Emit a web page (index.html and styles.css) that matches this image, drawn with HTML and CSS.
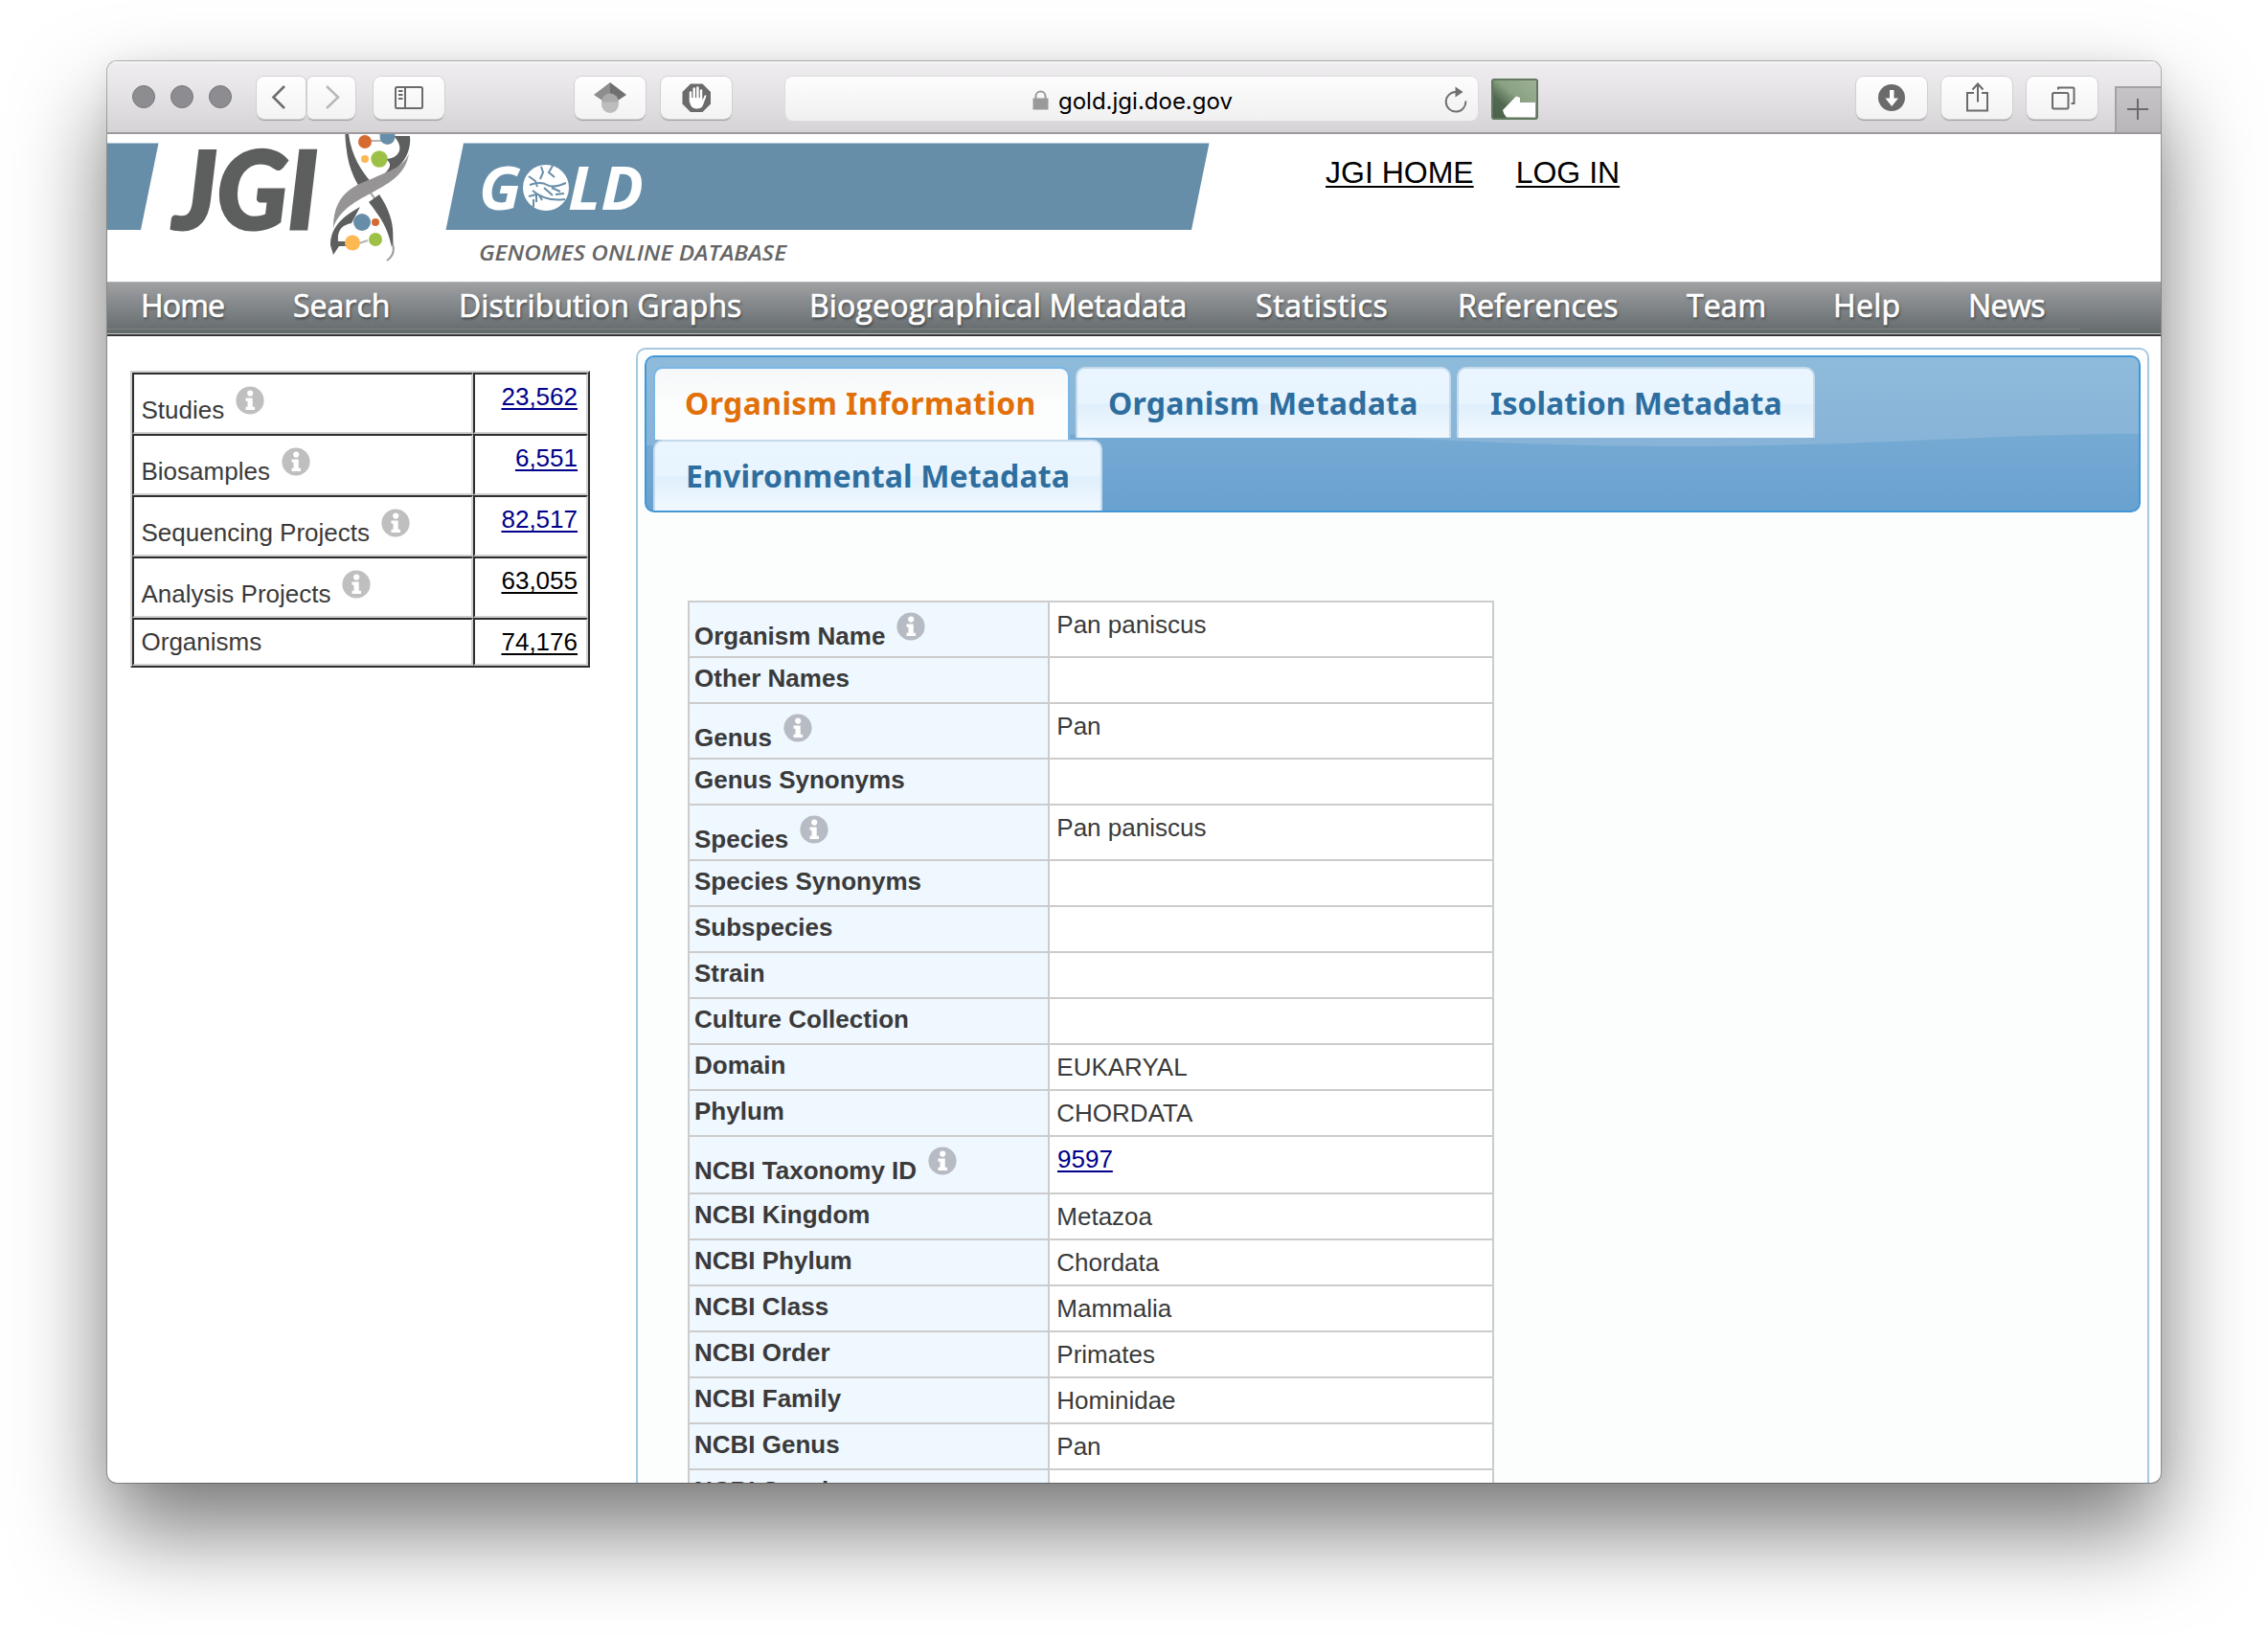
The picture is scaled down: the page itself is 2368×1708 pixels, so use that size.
FILE: index.html
```html
<!DOCTYPE html>
<html lang="en">
<head>
<meta charset="utf-8">
<title>GOLD - Genomes Online Database</title>
<link rel="stylesheet" href="styles.css">
</head>
<body>
<svg width="0" height="0" class="defs" aria-hidden="true">
  <symbol id="info" viewBox="0 0 30 30">
    <circle cx="15" cy="15" r="14.6" fill="currentColor"/>
    <circle cx="15.2" cy="7.6" r="3.1" fill="#fff"/>
    <path d="M10.5 12.5h7.2v9.3h2.3v3.2h-9.5v-3.2h2v-6.1h-2z" fill="#fff"/>
  </symbol>
</svg>
<div class="window">
  <div class="toolbar">
    <i class="light"></i><i class="light"></i><i class="light"></i>
    <div class="btn back"><svg width="51" height="44" viewBox="0 0 51 44"><path d="M29 10L17.500 21.500L29 33" fill="none" stroke="#6e6e6e" stroke-width="2.600"/></svg></div>
    <div class="btn fwd"><svg width="51" height="44" viewBox="0 0 51 44"><path d="M20 10L32 21.500L20 33" fill="none" stroke="#b9b9b9" stroke-width="2.600"/></svg></div>
    <div class="btn side"><svg width="74" height="44" viewBox="0 0 74 44"><rect x="23" y="11" width="28" height="22" rx="1.500" fill="none" stroke="#6b6b6b" stroke-width="2"/><path d="M33 11v22M26 15h4.500M26 19h4.500M26 23h4.500" stroke="#6b6b6b" stroke-width="2"/></svg></div>
    <div class="btn cap"><svg width="74" height="44" viewBox="0 0 74 44"><path d="M37 6L20 19L29 25L37 20Z" fill="#8d8d8d"/><path d="M37 6L54 19L45 25L37 20Z" fill="#707070"/><circle cx="37" cy="29" r="9" fill="#bdbdbd"/><path d="M28 26.500a9 9 0 0 1 18 0z" fill="#aaa"/></svg></div>
    <div class="btn hand"><svg width="74" height="44" viewBox="0 0 74 44"><path d="M31 7.500h12.500l8.500 8.500v12.500l-8.500 8.500h-12.500l-8.500-8.500v-12.500z" fill="#6b6b6b"/><path d="M31 26V16.500M34.700 24V12.500M38.400 24V11.500M42 25V14.500" stroke="#fff" stroke-width="2.500" stroke-linecap="round"/><path d="M29.800 22h13.500v3l2.500-5.500q2-1 1.500 1.200l-3.500 9.500q-1.500 3.300-6.500 3.300c-5 0-7.500-3.500-7.500-11.500z" fill="#fff"/></svg></div>
    <div class="address">
      <svg class="lock" width="17" height="21" viewBox="0 0 17 21"><path d="M3.500 9V6.500a5 5 0 0 1 10 0V9" fill="none" stroke="#9a9a9a" stroke-width="2"/><rect x=".5" y="8.500" width="16" height="12" fill="#9a9a9a"/></svg>
      <span>gold.jgi.doe.gov</span>
      <svg class="reload" width="26" height="30" viewBox="0 0 26 30"><path d="M13 7A10.300 10.300 0 1 0 23.300 16.500" fill="none" stroke="#707070" stroke-width="2"/><path d="M12.500 1.500l8 5.500L12.500 12.500z" fill="#707070"/></svg>
    </div>
    <svg class="thumb" width="49" height="43" viewBox="0 0 49 43"><defs><linearGradient id="tg" x1="1" y1="0" x2="0" y2="1"><stop offset="0" stop-color="#9fb396"/><stop offset=".45" stop-color="#8aa182"/><stop offset=".7" stop-color="#536850"/><stop offset="1" stop-color="#4a6048"/></linearGradient></defs><rect x="1" y="1" width="47" height="41" rx="2" fill="url(#tg)" stroke="#62785f" stroke-width="2"/><path d="M12 33L26 18.500L30 20V25H46V40.500H16Q13 38 12 33Z" fill="#fff"/></svg>
    <div class="btn dl"><svg width="74" height="44" viewBox="0 0 74 44"><circle cx="37" cy="22" r="14" fill="#6b6b6b"/><path d="M35 14h4.500v8.500h4.500l-6.800 8.500l-6.800-8.500h4.600z" fill="#fff"/></svg></div>
    <div class="btn share"><svg width="74" height="44" viewBox="0 0 74 44"><path d="M34 17h-7v18.500h21V17H42M38 26.500V8M32.500 13.500L38 7.500l5.500 6" fill="none" stroke="#6b6b6b" stroke-width="2"/></svg></div>
    <div class="btn tabs"><svg width="74" height="44" viewBox="0 0 74 44"><rect x="27" y="17" width="16.500" height="16.500" rx="1.500" fill="none" stroke="#6b6b6b" stroke-width="2"/><path d="M33 13.500v-2h15.500q1 0 1 1v15.500h-3" fill="none" stroke="#6b6b6b" stroke-width="2"/></svg></div>
    <div class="newtab"><svg width="46" height="46" viewBox="0 0 46 46"><path d="M11 22h22M22 11v22" stroke="#6b696b" stroke-width="2"/></svg></div>
  </div>

  <div class="banner">
    <svg class="logo" width="1160" height="154" viewBox="112 140 1160 154">
      <path d="M112 149.500H165.500L147 240H112Z" fill="#678ea9"/>
      <path d="M484 149.500H1262.500L1244 240H465.500Z" fill="#678ea9"/>
      <text class="jgi" x="181" y="239" textLength="151" lengthAdjust="spacingAndGlyphs">JGI</text>
      <g>
        <path d="M361 140C362 170 376 187 385 199C400 218 409 235 410 255C412 262 410 268 404 272" fill="none" stroke="#9b999a" stroke-width="2"/>
        <path d="M361 140H364C367 163 377 178 389 192L378 200C365 180 361 163 361 140Z" fill="#5d5e5e"/>
        <path d="M385 211L396 203C408 221 413 238 409 258C405 240 400 230 385 211Z" fill="#5d5e5e"/>
        <path d="M411 142H428C430 161 418 178 396 186C409 176 410 170 402 166C417 166 423 154 411 142Z" fill="#5d5e5e"/>
        <path d="M427 160C421 202 361 199 348 238C348 196 378 192 394 184C414 176 423 171 427 160Z" fill="#969495"/>
        <path d="M376 216C354 228 345 240 345 256L348 266L354 257H362V252H353C352 240 357 235 367 233Z" fill="#5d5e5e"/>
        <path d="M380 147h20M375 254l9-3" stroke="#b5b5b5" stroke-width="2"/>
        <circle cx="381" cy="148" r="7" fill="#d66b32"/>
        <path d="M396.500 140H412.500Q413 150.500 404.500 151Q396 150.500 396.500 140Z" fill="#678ea9"/>
        <circle cx="381" cy="166" r="4" fill="#fcb853"/>
        <circle cx="396" cy="166" r="8.700" fill="#9dc146"/>
        <circle cx="378" cy="232" r="9" fill="#678ea9"/>
        <circle cx="392" cy="232" r="4" fill="#d66b32"/>
        <circle cx="368" cy="253.500" r="8" fill="#fcb853"/>
        <circle cx="392" cy="250" r="7" fill="#9dc146"/>
      </g>
      <text class="gold" x="500" y="219" textLength="44" lengthAdjust="spacingAndGlyphs">G</text>
      <circle cx="570" cy="196" r="24" fill="#fff"/>
      <path d="M565 174l2 6-3 7M577 173l-4 7 6 5M552 184l7 5 2 6M553 193q12-4 18 0t20-2M556 199q14 12 34 9M568 196l9 8M576 196l9 4M552 205l8-2 0 8M557 208v8M563 204l3 5M580 203l9-1" fill="none" stroke="#678ea9" stroke-width="2"/>
      <text class="gold" x="593" y="219" textLength="79" lengthAdjust="spacingAndGlyphs">LD</text>
      <text class="tagline" x="500" y="272" textLength="321" lengthAdjust="spacingAndGlyphs">GENOMES ONLINE DATABASE</text>
    </svg>
    <div class="toplinks"><a>JGI HOME</a><a>LOG IN</a></div>
  </div>

  <div class="nav"><div class="navitems">
    <span>Home</span><span>Search</span><span>Distribution Graphs</span><span>Biogeographical Metadata</span><span>Statistics</span><span>References</span><span>Team</span><span>Help</span><span>News</span>
  </div></div>

  <div class="main">
    <div class="stats">
      <div class="cell">Studies<svg class="info"><use href="#info"/></svg></div><div class="cell num"><a>23,562</a></div>
      <div class="cell">Biosamples<svg class="info"><use href="#info"/></svg></div><div class="cell num"><a>6,551</a></div>
      <div class="cell">Sequencing Projects<svg class="info"><use href="#info"/></svg></div><div class="cell num"><a>82,517</a></div>
      <div class="cell">Analysis Projects<svg class="info"><use href="#info"/></svg></div><div class="cell num"><a class="seen">63,055</a></div>
      <div class="cell plain">Organisms</div><div class="cell num"><a class="seen">74,176</a></div>
    </div>

    <div class="panel">
      <div class="tabbar">
        <svg class="wave" width="1558" height="160" viewBox="675 373 1558 160" preserveAspectRatio="none"><defs><linearGradient id="wg" x1="0" y1="0" x2="0" y2="1"><stop offset="0" stop-color="#8fbbdb"/><stop offset="1" stop-color="#86b3d7"/></linearGradient></defs><path d="M675 373H2233V453C2080 453 1960 466 1750 466S1420 451 1250 451S960 466 750 466L675 465Z" fill="url(#wg)"/></svg>
        <div class="tabrow">
          <div class="tab active"><span>Organism Information</span></div>
          <div class="tab t2"><span>Organism Metadata</span></div>
          <div class="tab t3"><span>Isolation Metadata</span></div>
        </div>
        <div class="tabrow"><div class="tab t4"><span>Environmental Metadata</span></div></div>
      </div>
      <div class="details">
        <div class="row tall"><b>Organism Name<svg class="info"><use href="#info"/></svg></b><span>Pan paniscus</span></div>
        <div class="row"><b>Other Names</b><span></span></div>
        <div class="row tall"><b>Genus<svg class="info"><use href="#info"/></svg></b><span>Pan</span></div>
        <div class="row"><b>Genus Synonyms</b><span></span></div>
        <div class="row tall"><b>Species<svg class="info"><use href="#info"/></svg></b><span>Pan paniscus</span></div>
        <div class="row"><b>Species Synonyms</b><span></span></div>
        <div class="row"><b>Subspecies</b><span></span></div>
        <div class="row"><b>Strain</b><span></span></div>
        <div class="row"><b>Culture Collection</b><span></span></div>
        <div class="row"><b>Domain</b><span>EUKARYAL</span></div>
        <div class="row"><b>Phylum</b><span>CHORDATA</span></div>
        <div class="row tall taxid"><b>NCBI Taxonomy ID<svg class="info"><use href="#info"/></svg></b><span><a>9597</a></span></div>
        <div class="row"><b>NCBI Kingdom</b><span>Metazoa</span></div>
        <div class="row"><b>NCBI Phylum</b><span>Chordata</span></div>
        <div class="row"><b>NCBI Class</b><span>Mammalia</span></div>
        <div class="row"><b>NCBI Order</b><span>Primates</span></div>
        <div class="row"><b>NCBI Family</b><span>Hominidae</span></div>
        <div class="row"><b>NCBI Genus</b><span>Pan</span></div>
        <div class="row"><b>NCBI Species</b><span>Pan paniscus</span></div>
      </div>
    </div>
  </div>
</div>
</body>
</html>
```
FILE: styles.css
```css
* { box-sizing: border-box; }
body {
  margin: 0;
  width: 2368px;
  height: 1708px;
  padding: 64px 112px 0;
  background: #fff;
  overflow: hidden;
  font-family: "Liberation Sans", Arial, sans-serif;
  font-size: 26px;
  line-height: 30px;
  color: #3a3a3a;
}
.defs { position: absolute; }
svg { display: block; flex: none; }
a { text-decoration: underline; color: #00008b; text-decoration-thickness: 2px; text-underline-offset: 3px; }
a.seen { color: #000; }

.window {
  width: 2144px;
  height: 1484px;
  border-radius: 10px;
  overflow: hidden;
  background: #fff;
  box-shadow: 0 0 0 1px rgba(0,0,0,.27), 0 50px 96px rgba(0,0,0,.53), 0 0 24px rgba(0,0,0,.05);
}

/* browser toolbar */
.toolbar {
  display: flex;
  align-items: flex-start;
  height: 76px;
  padding: 16px 0 0 26px;
  border-bottom: 2px solid #9c9a9d;
  background: linear-gradient(#efedef 0, #e9e7ea 30%, #d5d3d5 100%);
  box-shadow: inset 0 2px #f6f5f6;
}
.light {
  width: 24px;
  height: 24px;
  margin: 9px 16px 0 0;
  border-radius: 50%;
  border: 1px solid #77767a;
  background: #8d8c90;
}
.btn {
  width: 74px;
  height: 44px;
  border-radius: 8px;
  background: linear-gradient(#fefefe, #f3f3f3);
  box-shadow: 0 0 0 1px #d2d0d2, 0 1.500px 1px #a3a1a3;
}
.back { width: 51px; margin-left: 10px; border-radius: 8px 6px 6px 8px; }
.fwd { width: 50px; margin-left: 2px; border-radius: 6px 8px 8px 6px; }
.side { margin-left: 19px; }
.cap { margin-left: 136px; }
.hand { margin-left: 16px; }
.address {
  display: flex;
  width: 723px;
  height: 46px;
  margin-left: 56px;
  padding: 14px 10px 0 258px;
  border-radius: 8px;
  background: linear-gradient(#fdfdfd, #f0f0f0);
  box-shadow: 0 0 0 1px #dddbdd;
  font: 24px/26px Inter, "Liberation Sans", sans-serif;
  color: #000;
}
.lock { margin: 0 10px 0 0; }
.address span { flex: none; width: 184px; margin-top: -1px; }
.reload { margin: -5px 0 0 auto; }
.thumb { margin: 2px 0 0 14px; }
.dl { margin-left: 332px; }
.share, .tabs { margin-left: 15px; }
.newtab {
  width: 48px;
  height: 48px;
  margin: 10px 0 0 auto;
  border: solid #a3a1a4;
  border-width: 2px 0 0 2px;
  background: linear-gradient(#c6c4c7, #b8b6b9);
}

/* site banner */
.banner { display: flex; height: 154px; }
.logo { overflow: visible; }
.jgi { font: italic 900 113px Lato, sans-serif; fill: #5d5e5e; stroke: #5d5e5e; stroke-width: 3px; }
.gold { font: italic 700 63px "Open Sans", sans-serif; fill: #fff; }
.tagline { font: italic 600 22px "Open Sans", sans-serif; fill: #666; }
.toplinks { display: flex; gap: 44px; margin: 23px 0 0 112px; font-size: 32px; line-height: 34px; }
.toplinks a { color: #000; text-underline-offset: 3px; }

.nav {
  height: 57px;
  border-bottom: 2px solid #383538;
  background: linear-gradient(#a1a2a3, #85898c 42%, #646a6c 98%, #c8c8c8 98%);
}
.navitems {
  display: grid;
  grid-template-columns: 159px 173px 366px 466px 211px 239px 153px 141px 116px;
  width: 2060px;
  height: 50px;
  padding-left: 35px;
  border-bottom: 1px solid #7c8183;
  border-top: 1px solid #b2b3b4;
  font: 32px/48px "Open Sans", sans-serif;
  color: #fff;
  -webkit-text-stroke: .7px #fff;
  text-shadow: 1px 2px 3px rgba(0,0,0,.5);
  white-space: nowrap;
}
.navitems span:nth-child(1) { letter-spacing: -.8px; }
.navitems span:nth-child(3) { letter-spacing: .1px; }
.navitems span:nth-child(4) { letter-spacing: .18px; }
.navitems span:nth-child(5) { letter-spacing: .7px; }
.navitems span:nth-child(6) { letter-spacing: .2px; }
.navitems span:nth-child(8) { letter-spacing: .3px; }
.navitems span:nth-child(9) { letter-spacing: -.5px; }

/* page body */
.main { display: flex; height: 1197px; }
.stats {
  display: grid;
  grid-template-columns: 356px 120px;
  grid-template-rows: repeat(4, 64px) 50px;
  width: 480px;
  height: 310px;
  margin: 36px 48px 0 24px;
  border: 2px solid;
  border-color: #d0d0d0 #2d2d2d #2d2d2d #d0d0d0;
}
.cell {
  display: flex;
  align-items: flex-start;
  padding: 22px 9px 0 7.500px;
  border: 2px solid;
  border-color: #2d2d2d #d0d0d0 #d0d0d0 #2d2d2d;
}
.cell.plain, .cell.num { padding-top: 8px; }
.cell.num { justify-content: flex-end; }
.info { width: 30px; height: 30px; margin: -10px 0 0 12px; color: #bfbfbf; }

.panel {
  width: 1580px;
  height: 1300px;
  margin-top: 12px;
  padding: 6px 7px;
  border: 2px solid #a6c9e2;
  border-radius: 10px;
  background: #fcfdfd;
}
.tabbar {
  position: relative;
  height: 164px;
  padding: 10px 0 0 7px;
  border: 2px solid #4297d7;
  border-radius: 10px;
  background: linear-gradient(#7db0d6, #75aad3 50%, #69a1cf 100%);
  overflow: hidden;
}
.wave { position: absolute; left: 0; top: 0; }
.tabrow { position: relative; display: flex; height: 76px; align-items: flex-start; }
.tab {
  height: 74px;
  border: 2px solid #c5dbec;
  border-bottom: 0;
  border-radius: 10px 10px 0 0;
  background: linear-gradient(#eaf5ff, #e8f4fe 50%, #dfeffc 52%, #f2f9ff);
  color: #2e6e9e;
  font: bold 32px/72px "Noto Sans", sans-serif;
  white-space: nowrap;
  padding-left: 32px;
}
.active {
  width: 435px;
  height: 76px;
  padding-left: 31px;
  border-color: #79b7e7;
  background: linear-gradient(#f5f8f9, #fcfdfd 50%);
  color: #e17009;
  letter-spacing: .38px;
}
.t2 { width: 392px; margin-left: 6px; letter-spacing: .25px; }
.t3 { width: 374px; margin-left: 6px; padding-left: 33px; }
.t4 { width: 469px; letter-spacing: .15px; }

.details { width: 842px; margin: 92px 0 0 45px; border: solid #ccc; border-width: 0 2px; }
.row { display: flex; height: 48px; border-top: 2px solid #ccc; background: #fff; }
.row b { display: flex; align-items: flex-start; width: 376px; padding: 6px 0 0 5px; border-right: 2px solid #ccc; background: #eff7ff; }
.row span { padding: 8px 0 0 7.300px; }
.tall { height: 58px; }
.taxid { height: 60px; }
.taxid span { padding-left: 8px; }
.tall b { padding-top: 20px; }
.row .info { color: #b7bbc3; margin-top: -10px; margin-left: 12px; }
```
